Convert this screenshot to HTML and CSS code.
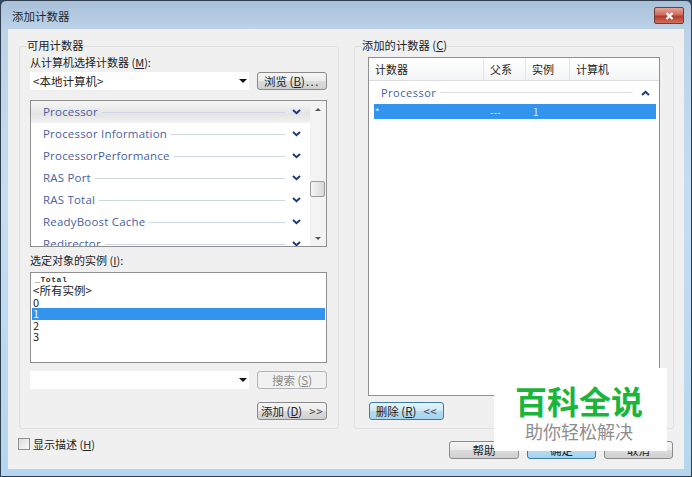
FILE: index.html
```html
<!DOCTYPE html>
<html lang="zh-CN">
<head>
<meta charset="utf-8">
<title>添加计数器</title>
<link rel="stylesheet" href="styles.css">
</head>
<body>
<svg class="defs" width="0" height="0" aria-hidden="true">
  <symbol id="down" viewBox="0 0 9 6"><path d="M1 1l3.5 3.2L8 1" fill="none" stroke="#1f3a7a" stroke-width="2"/></symbol>
  <symbol id="up" viewBox="0 0 9 6"><path d="M1 5l3.5-3.2L8 5" fill="none" stroke="#1f3a7a" stroke-width="2"/></symbol>
</svg>
<div class="window">
  <div class="titlebar">
    <span class="title">添加计数器</span>
    <span class="close"><svg width="9" height="8" viewBox="0 0 9 8"><path d="M1.5 1l6 6M7.5 1l-6 6" stroke="#fff" stroke-width="2.2" fill="none"/></svg></span>
  </div>
  <div class="client">
    <div class="groups">
      <section class="group group-left">
        <div class="legend">可用计数器</div>
        <div class="label label-first">从计算机选择计数器 (<u>M</u>):</div>
        <div class="control-row">
          <div class="combo"><span>&lt;本地计算机&gt;</span><i class="arrow"></i></div>
          <button class="btn btn-wide">浏览 (<u>B</u>)<span class="dots">...</span></button>
        </div>
        <div class="objects">
          <div class="object-rows">
            <div class="obj obj-active"><span>Processor</span><b></b><svg width="9" height="6"><use href="#down"/></svg></div>
            <div class="obj"><span>Processor Information</span><b></b><svg width="9" height="6"><use href="#down"/></svg></div>
            <div class="obj"><span>ProcessorPerformance</span><b></b><svg width="9" height="6"><use href="#down"/></svg></div>
            <div class="obj"><span>RAS Port</span><b></b><svg width="9" height="6"><use href="#down"/></svg></div>
            <div class="obj"><span>RAS Total</span><b></b><svg width="9" height="6"><use href="#down"/></svg></div>
            <div class="obj"><span>ReadyBoost Cache</span><b></b><svg width="9" height="6"><use href="#down"/></svg></div>
            <div class="obj"><span>Redirector</span><b></b><svg width="9" height="6"><use href="#down"/></svg></div>
          </div>
          <div class="scrollbar">
            <i class="sb-up"></i>
            <i class="sb-thumb"></i>
            <i class="sb-down"></i>
          </div>
        </div>
        <div class="label label-inst">选定对象的实例 (<u>I</u>):</div>
        <div class="instances">
          <div class="inst inst-small">_Total</div>
          <div class="inst inst-all">&lt;所有实例&gt;</div>
          <div class="inst">0</div>
          <div class="inst inst-sel">1</div>
          <div class="inst">2</div>
          <div class="inst">3</div>
        </div>
        <div class="control-row control-search">
          <div class="combo"><span></span><i class="arrow"></i></div>
          <button class="btn btn-wide btn-disabled">搜索 (<u>S</u>)</button>
        </div>
        <div class="add-row">
          <button class="btn btn-wide">添加 (<u>D</u>)<span class="chev">&gt;&gt;</span></button>
        </div>
      </section>
      <section class="group group-right">
        <div class="legend">添加的计数器 (<u>C</u>)</div>
        <div class="added">
          <div class="added-head">
            <span>计数器</span><span>父系</span><span>实例</span><span>计算机</span>
          </div>
          <div class="added-group"><span>Processor</span><b></b><svg width="9" height="6"><use href="#up"/></svg></div>
          <div class="added-row"><span>*</span><span>---</span><span>1</span></div>
        </div>
        <button class="btn btn-focus">删除 (<u>R</u>)<span class="chev">&lt;&lt;</span></button>
      </section>
    </div>
    <div class="footer">
      <label class="check"><i class="box"></i><span>显示描述 (<u>H</u>)</span></label>
      <div class="actions">
        <button class="btn btn-help">帮助</button>
        <button class="btn btn-focus btn-ok">确定</button>
        <button class="btn btn-ok">取消</button>
      </div>
    </div>
  </div>
  <div class="watermark">
    <div class="wm-title">百科全说</div>
    <div class="wm-sub">助你轻松解决</div>
  </div>
</div>
</body>
</html>
```
FILE: styles.css
```css
* { box-sizing: border-box; }
html, body { margin: 0; padding: 0; }
body {
  width: 692px;
  height: 477px;
  overflow: hidden;
  background: #33485c;
  font: 11px/12px "Noto Sans CJK SC", "Liberation Sans", sans-serif;
  color: #222;
}
.defs { position: absolute; }
u { text-decoration-thickness: 1px; }
.window {
  position: relative;
  width: 692px;
  height: 477px;
  display: flex;
  flex-direction: column;
  padding: 1px 7px 7px 7px;
  border: 1px solid #2f3f4f;
  border-radius: 6px 6px 0 0;
  background: linear-gradient(#a9c0d8 0, #bcd2e7 28px, #c6dcf2 200px, #b4d6ee 477px);
}
.titlebar {
  height: 27px;
  flex: none;
  display: flex;
  align-items: center;
  justify-content: space-between;
}
.title { margin: 0 0 0 4px; font-size: 11.5px; color: #1d2a36; }
.close {
  width: 30px;
  height: 17px;
  display: flex;
  align-items: center;
  justify-content: center;
  border: 1px solid #6f3d3a;
  border-radius: 2px;
  background: linear-gradient(#e2a696 0, #cf6a5c 45%, #b23c2e 55%, #cf6f5a 100%);
}
.client {
  flex: 1;
  display: flex;
  flex-direction: column;
  background: #f0f0f0;
  padding: 0 10px 0 11px;
}
.groups {
  margin-top: 17px;
  display: flex;
  gap: 15px;
}
.group {
  width: 320px;
  height: 383px;
  border: 1px solid #dfdfdf;
  border-radius: 3px;
  background: #f0f0f0;
}
.group-left { padding: 0 11px 0 10px; }
.group-right { padding: 0 13px; }
.legend {
  height: 14px;
  line-height: 14px;
  margin: -9px 0 0 -3px;
  width: max-content;
  background: #f0f0f0;
  font-size: 11.3px;
}
.group-right .legend { margin-left: -6px; }
.label { height: 12px; white-space: nowrap; }
.label-first { margin-top: 4px; }
.label-inst { margin-top: 7px; }
.control-row {
  margin-top: 4px;
  height: 19px;
  display: flex;
  justify-content: space-between;
}
.control-search { margin-top: 8px; }
.combo {
  width: 219px;
  height: 18px;
  background: #fff;
  border-radius: 2px;
  display: flex;
  align-items: center;
  justify-content: space-between;
  padding: 0 2px 0 3px;
  font-size: 11.5px;
}
.arrow {
  width: 0;
  height: 0;
  border: 4px solid transparent;
  border-top-color: #111;
  border-bottom: 0;
}
.btn {
  height: 18px;
  padding: 0;
  border: 1px solid #8a8a8a;
  border-radius: 3px;
  background: linear-gradient(#f5f5f5 0, #ebebeb 48%, #dcdcdc 52%, #cfcfcf 100%);
  font: 11.5px/14px "Noto Sans CJK SC", "Liberation Sans", sans-serif;
  color: #222;
  white-space: nowrap;
}
.btn-wide { width: 70px; }
.dots { letter-spacing: 1.5px; margin-left: 1px; }
.chev { margin-left: 7px; letter-spacing: 0.5px; color: #444; }
.btn-disabled {
  color: #8a8a8a;
  background: #f1f1f1;
  border-color: #b5b5b5;
}
.btn-focus {
  border-color: #3d7ba8;
  background: linear-gradient(#e6f4fb 0, #cfe9f7 48%, #b3dcf3 52%, #a5d3ee 100%);
}
.objects {
  margin-top: 9px;
  height: 147px;
  border: 1px solid #8f8f8f;
  background: #fff;
  display: flex;
  overflow: hidden;
}
.object-rows { flex: 1; overflow: hidden; }
.obj {
  height: 22px;
  display: flex;
  align-items: center;
  padding: 0 9px 0 12px;
  font: 11.5px/14px "Open Sans", "Liberation Sans", sans-serif;
  color: #4a5fa0;
  letter-spacing: 0.2px;
}
.obj b, .added-group b {
  flex: 1;
  height: 1px;
  margin: 0 7px 0 4px;
  background: #ccd6e6;
}
.obj svg, .added-group svg { flex: none; }
.obj-active { background: linear-gradient(#f6f6f6, #e4e4e4 60%, #f2f2f2); }
.scrollbar {
  width: 16px;
  flex: none;
  background: #f3f3f3;
  padding-top: 7px;
  display: flex;
  flex-direction: column;
  align-items: center;
}
.sb-up, .sb-down {
  width: 0;
  height: 0;
  border: 3px solid transparent;
  flex: none;
}
.sb-up { border-top: 0; border-bottom-color: #555; }
.sb-down { border-bottom: 0; border-top-color: #555; margin-top: 40px; }
.sb-thumb {
  width: 15px;
  height: 16px;
  flex: none;
  margin-top: 70px;
  align-self: flex-start;
  border: 1px solid #9a9a9a;
  border-radius: 2px;
  background: linear-gradient(90deg, #f5f5f5, #d8d8d8);
}
.instances {
  margin-top: 6px;
  height: 91px;
  border: 1px solid #8f8f8f;
  background: #fff;
  padding: 1px;
}
.inst {
  height: 11.4px;
  line-height: 11.4px;
  padding-left: 1px;
  font-size: 11px;
  white-space: nowrap;
}
.inst-all { font-size: 11.5px; }
.inst-small {
  padding-left: 3px;
  font: 700 8px/11.4px "Liberation Mono", monospace;
  letter-spacing: 0.6px;
  color: #333;
}
.inst-sel { background: #3394ee; color: #eaf4ff; }
.add-row {
  margin-top: 12px;
  display: flex;
  justify-content: flex-end;
}
.added {
  margin-top: 5px;
  width: 292px;
  height: 339px;
  border: 1px solid #8f8f8f;
  background: #fff;
}
.added-head {
  height: 23px;
  display: grid;
  grid-template-columns: 115px 42px 44px 1fr;
  border-bottom: 1px solid #dedede;
  background: linear-gradient(#fff, #f4f5f6);
  align-items: center;
}
.added-head span {
  height: 100%;
  line-height: 22px;
  padding-left: 6px;
  border-right: 1px solid #e4e4e4;
}
.added-head span:last-child { border-right: 0; }
.added-group {
  height: 23px;
  display: flex;
  align-items: center;
  padding: 0 9px 0 12px;
  font: 11px/14px "Open Sans", "Liberation Sans", sans-serif;
  letter-spacing: 0.5px;
  color: #4a5fa0;
}
.added-group b { background: #dfe3e8; margin-right: 8px; }
.added-row {
  height: 15px;
  margin: 0 3px 0 5px;
  display: grid;
  grid-template-columns: 115px 43px 1fr;
  background: #3394ee;
  color: #d8ecff;
  line-height: 15px;
  font-size: 10px;
  padding-left: 1px;
}
.group-right .btn-focus {
  display: block;
  margin: 6px 0 0 1px;
  width: 75px;
}
.footer {
  flex: 1;
  display: flex;
  justify-content: space-between;
  align-items: flex-start;
}
.check {
  margin: 9px 0 0 -1px;
  display: flex;
  align-items: center;
  gap: 3px;
  white-space: nowrap;
}
.box {
  width: 12px;
  height: 12px;
  border: 1px solid #8e8f8f;
  background: linear-gradient(135deg, #dcdcdc, #fafafa);
}
.actions {
  margin: 12px 1px 0 0;
  display: flex;
  gap: 8px;
}
.btn-help { width: 70px; }
.btn-ok { width: 69px; }
.watermark {
  position: absolute;
  left: 493px;
  top: 367px;
  width: 173px;
  height: 83px;
  background: #fff;
  text-align: center;
  padding-right: 3px;
}
.wm-title {
  margin-top: 15px;
  font: 700 32px/34px "Noto Sans CJK SC", sans-serif;
  color: #1bb53c;
}
.wm-sub {
  margin-top: 3px;
  font: 18px/22px "Noto Sans CJK SC", sans-serif;
  color: #8e8e8e;
}
```
